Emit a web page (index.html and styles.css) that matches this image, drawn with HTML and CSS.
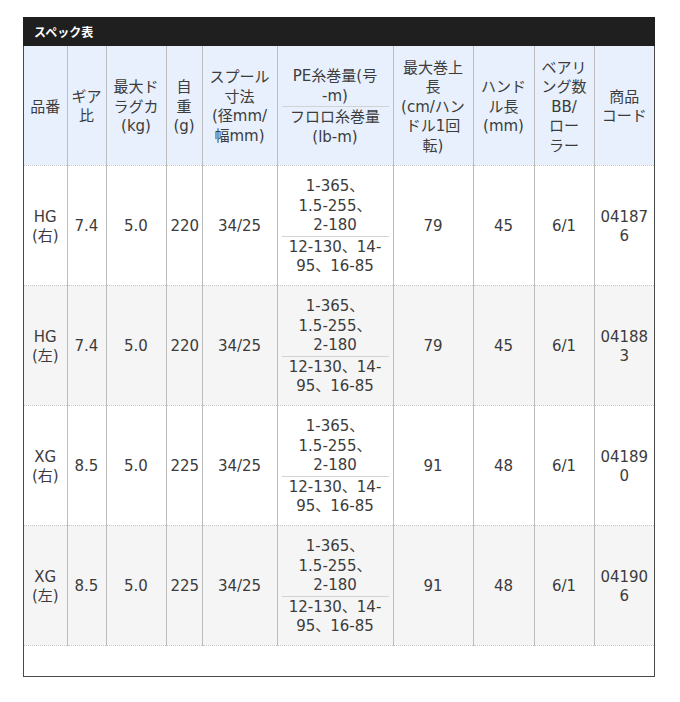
FILE: index.html
```html
<!DOCTYPE html>
<html lang="ja">
<head>
<meta charset="utf-8">
<title>スペック表</title>
<link rel="stylesheet" href="styles.css">
</head>
<body>
<div class="spec">
  <div class="spec-title">スペック表</div>
  <table class="spec-table">
    <colgroup>
      <col class="c1"><col class="c2"><col class="c3"><col class="c4"><col class="c5">
      <col class="c6"><col class="c7"><col class="c8"><col class="c9"><col class="c10">
    </colgroup>
    <thead>
      <tr>
        <th>品番</th>
        <th>ギア<br>比</th>
        <th>最大ド<br>ラグカ<br>(kg)</th>
        <th>自<br>重<br>(g)</th>
        <th>スプール<br>寸法<br>(径mm/<br>幅mm)</th>
        <th class="split"><div class="part">PE糸巻量(号<br>-m)</div><div class="part lower">フロロ糸巻量<br>(lb-m)</div></th>
        <th>最大巻上<br>長<br>(cm/ハン<br>ドル1回<br>転)</th>
        <th>ハンド<br>ル長<br>(mm)</th>
        <th>ベアリ<br>ング数<br>BB/<br>ロー<br>ラー</th>
        <th>商品<br>コード</th>
      </tr>
    </thead>
    <tbody>
      <tr>
        <td>HG<br>(右)</td><td>7.4</td><td>5.0</td><td>220</td><td>34/25</td>
        <td class="split"><div class="part">1-365、<br>1.5-255、<br>2-180</div><div class="part lower">12-130、14-<br>95、16-85</div></td>
        <td>79</td><td>45</td><td>6/1</td><td>04187<br>6</td>
      </tr>
      <tr class="alt">
        <td>HG<br>(左)</td><td>7.4</td><td>5.0</td><td>220</td><td>34/25</td>
        <td class="split"><div class="part">1-365、<br>1.5-255、<br>2-180</div><div class="part lower">12-130、14-<br>95、16-85</div></td>
        <td>79</td><td>45</td><td>6/1</td><td>04188<br>3</td>
      </tr>
      <tr>
        <td>XG<br>(右)</td><td>8.5</td><td>5.0</td><td>225</td><td>34/25</td>
        <td class="split"><div class="part">1-365、<br>1.5-255、<br>2-180</div><div class="part lower">12-130、14-<br>95、16-85</div></td>
        <td>91</td><td>48</td><td>6/1</td><td>04189<br>0</td>
      </tr>
      <tr class="alt">
        <td>XG<br>(左)</td><td>8.5</td><td>5.0</td><td>225</td><td>34/25</td>
        <td class="split"><div class="part">1-365、<br>1.5-255、<br>2-180</div><div class="part lower">12-130、14-<br>95、16-85</div></td>
        <td>91</td><td>48</td><td>6/1</td><td>04190<br>6</td>
      </tr>
    </tbody>
  </table>
</div>
</body>
</html>
```

FILE: styles.css
```css
html, body {
  margin: 0;
  padding: 0;
  background: #fff;
}

body {
  padding: 17px 0 0 23px;
  font-family: "DejaVu Sans", "Noto Sans CJK JP", sans-serif;
  color: #3c3c3c;
}

.spec {
  box-sizing: border-box;
  width: 632px;
  border: 1px solid #4a4a4a;
  border-top: none;
  padding-bottom: 30px;
}

.spec-title {
  height: 29px;
  line-height: 29px;
  background: #1f1f1f;
  color: #fff;
  font-family: "Noto Sans CJK JP", sans-serif;
  font-weight: bold;
  font-size: 12px;
  padding-left: 11px;
  margin: 0 -1px;
}

.spec-table {
  width: 630px;
  table-layout: fixed;
  border-collapse: collapse;
  font-size: 15px;
  line-height: 19.5px;
}

.c1 { width: 43px; }
.c2 { width: 39px; }
.c3 { width: 60px; }
.c4 { width: 36px; }
.c5 { width: 75px; }
.c6 { width: 116px; }
.c7 { width: 80px; }
.c8 { width: 61px; }
.c9 { width: 60px; }
.c10 { width: 60px; }

.spec-table th,
.spec-table td {
  padding: 4px 4px 0;
  text-align: center;
  vertical-align: middle;
  font-weight: normal;
  border-left: 1px solid #bdbdbd;
  border-right: 1px solid #bdbdbd;
  border-bottom: 1px dotted #c8c8c8;
}

.spec-table th:first-child,
.spec-table td:first-child {
  border-left: none;
}

.spec-table th:last-child,
.spec-table td:last-child {
  border-right: none;
}

.spec-table thead tr {
  height: 119px;
  background: #e7f0fc;
}

.spec-table tbody tr {
  height: 120px;
  background: #fff;
}

.spec-table tbody tr.alt {
  background: #f5f5f5;
}

.part.lower {
  border-top: 1px solid #d2d2d2;
  padding-top: 1px;
}
```
